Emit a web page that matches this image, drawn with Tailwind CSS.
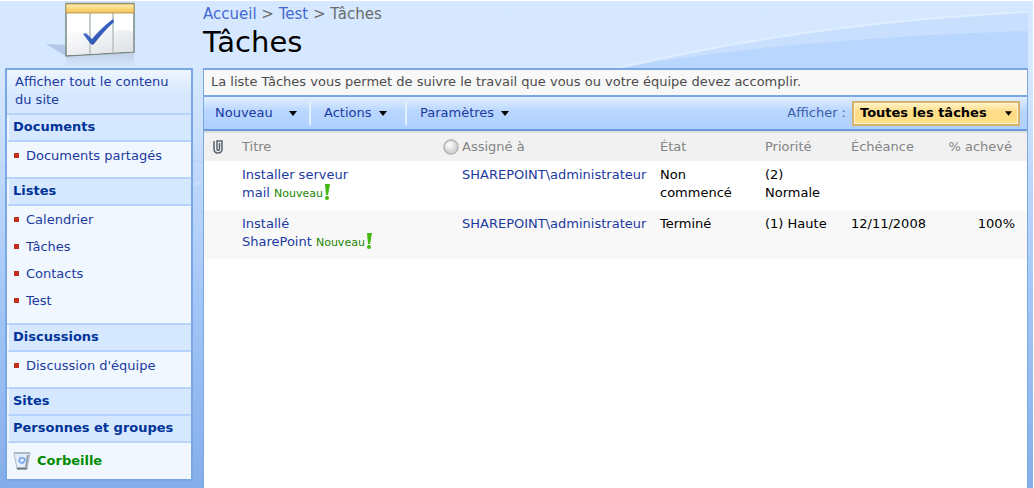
<!DOCTYPE html>
<html lang="fr">
<head>
<meta charset="utf-8">
<title>Tâches</title>
<script src="https://cdn.jsdelivr.net/npm/@tailwindcss/browser@4"></script>
</head>
<body class="bg-white pt-px pr-px font-['DejaVu_Sans',sans-serif] text-[13px] leading-[18px] text-[#1b3aa0]">
<div class="relative isolate flex min-h-[calc(100vh-1px)] bg-linear-to-b from-[#d6e8ff] from-15% via-[#a5c7f7] via-60% to-[#84aeea] pr-[5px]">
  <svg class="absolute top-0 right-[5px] -z-10 h-[67px] w-[410px]" viewBox="0 0 410 67" preserveAspectRatio="none" aria-hidden="true">
    <path d="M0 67Q190 22 410 11V67Z" fill="#c8dffe"/>
    <path d="M0 67Q100 50 200 42Q310 33 410 30V67Z" fill="#b9d6ff"/>
    <path d="M0 67Q190 22 410 11" fill="none" stroke="#e0eeff" stroke-width="2"/>
  </svg>
  <svg class="absolute top-[155px] left-0 -z-10 h-[40px] w-[203px]" viewBox="0 0 203 40" aria-hidden="true">
    <path d="M0 10Q120 -8 203 6" fill="none" stroke="#bad5fb" stroke-width="2"/>
    <path d="M160 34Q190 32 203 25" fill="none" stroke="#c9dffc" stroke-width="2"/>
  </svg>

  <aside class="w-[203px] shrink-0 pr-[10px] pl-[5px]">
    <div class="flex h-[67px] pl-[40px]">
      <svg class="h-[67px] w-[95px]" viewBox="45 1 95 67" role="img" aria-label="Liste de tâches">
        <defs>
          <linearGradient id="gold" x2="0" y2="1"><stop stop-color="#fff1bd"/><stop offset=".5" stop-color="#fbd67b"/><stop offset="1" stop-color="#f3c25f"/></linearGradient>
          <linearGradient id="cell" x2="1" y2="1"><stop stop-color="#fff"/><stop offset="1" stop-color="#dcdfe4"/></linearGradient>
          <linearGradient id="reflection" x2="0" y2="1"><stop stop-color="#b9c6d8"/><stop offset="1" stop-color="#d6e8ff"/></linearGradient>
          <linearGradient id="tick" x2="1" y2="1"><stop stop-color="#5c8ce6"/><stop offset="1" stop-color="#17379a"/></linearGradient>
        </defs>
        <path d="M46 44L66 45V56Z" fill="#b3c8e6"/>
        <path d="M66 57L134 53V67H66Z" fill="url(#reflection)" opacity=".7"/>
        <path d="M66 3.500H134V52L66 56Z" fill="#fff" stroke="#788780" stroke-width="1.500"/>
        <path d="M67 33Q78 29 89 33V54L67 55ZM91 33Q102 28 112 31V52.500L91 54ZM114 31Q124 28 133 32V51.500L114 52.500Z" fill="url(#cell)"/>
        <path d="M90 13V54M113 13V53" stroke="#c5cdca" stroke-width="2"/>
        <path d="M66 4H134V13H66Z" fill="url(#gold)" stroke="#b99a56" stroke-width="1"/>
        <path d="M83 34Q86 32 88 35L92 39Q101 28 113 19L114 22Q104 31 94 44Q92 46 90 43Z" fill="url(#tick)"/>
      </svg>
    </div>
    <nav class="border-2 border-[#7ba7e5] bg-[#f0f7ff]" aria-label="Lancement rapide">
      <a href="#" class="block border-b-2 border-[#b6d3fb] bg-linear-to-b from-[#edf5ff] to-[#d6e8ff] to-60% pt-[3px] pr-2 pb-[4px] pl-[8px]">Afficher tout le contenu du site</a>
      <h2 class="h-[27px] border-b-2 border-l-2 border-[#b6d3fb] border-l-[#f0f7ff] bg-[#d6e8ff] pl-[4px] text-[13px] leading-6 font-bold text-[#003399]"><a href="#">Documents</a></h2>
      <ul class="h-[37px] border-b-2 border-[#b6d3fb]">
        <li class="flex h-[27px] items-center gap-[7px] pl-[7px]"><span class="size-[5px] bg-[#c0301a]"></span><a href="#">Documents partagés</a></li>
      </ul>
      <h2 class="h-[27px] border-b-2 border-l-2 border-[#b6d3fb] border-l-[#f0f7ff] bg-[#d6e8ff] pl-[4px] text-[13px] leading-6 font-bold text-[#003399]"><a href="#">Listes</a></h2>
      <ul class="h-[119px] border-b-2 border-[#b6d3fb]">
        <li class="flex h-[27px] items-center gap-[7px] pl-[7px]"><span class="size-[5px] bg-[#c0301a]"></span><a href="#">Calendrier</a></li>
        <li class="flex h-[27px] items-center gap-[7px] pl-[7px]"><span class="size-[5px] bg-[#c0301a]"></span><a href="#">Tâches</a></li>
        <li class="flex h-[27px] items-center gap-[7px] pl-[7px]"><span class="size-[5px] bg-[#c0301a]"></span><a href="#">Contacts</a></li>
        <li class="flex h-[27px] items-center gap-[7px] pl-[7px]"><span class="size-[5px] bg-[#c0301a]"></span><a href="#">Test</a></li>
      </ul>
      <h2 class="h-[27px] border-b-2 border-l-2 border-[#b6d3fb] border-l-[#f0f7ff] bg-[#d6e8ff] pl-[4px] text-[13px] leading-6 font-bold text-[#003399]"><a href="#">Discussions</a></h2>
      <ul class="h-[37px] border-b-2 border-[#b6d3fb]">
        <li class="flex h-[27px] items-center gap-[7px] pl-[7px]"><span class="size-[5px] bg-[#c0301a]"></span><a href="#">Discussion d'équipe</a></li>
      </ul>
      <h2 class="h-[27px] border-b-2 border-l-2 border-[#b6d3fb] border-l-[#f0f7ff] bg-[#d6e8ff] pl-[4px] text-[13px] leading-6 font-bold text-[#003399]"><a href="#">Sites</a></h2>
      <h2 class="h-[27px] border-b-2 border-l-2 border-[#b6d3fb] border-l-[#f0f7ff] bg-[#d6e8ff] pl-[4px] text-[13px] leading-6 font-bold whitespace-nowrap text-[#003399]"><a href="#">Personnes et groupes</a></h2>
      <a href="#" class="flex h-[36px] items-center gap-[6px] pl-[6px] font-bold text-[#008c00]">
        <svg class="h-[18px] w-[18px]" viewBox="0 0 18 18" aria-hidden="true">
          <path d="M1 1H17L14 17H4Z" fill="#e3eefb" stroke="#b4bfca"/>
          <path d="M1 1H17" stroke="#8d9aa8"/>
          <path d="M15 3L13 15" stroke="#94a0ad" stroke-width="2"/>
          <path d="M4 16.500H14" stroke="#6d7780" stroke-width="2"/>
          <path d="M7 6H11L12 8L10 11H8L6 9Z" fill="none" stroke="#6fa0f3" stroke-width="1.500"/>
        </svg>Corbeille</a>
    </nav>
  </aside>

  <div class="flex min-w-0 grow flex-col">
    <header class="h-[67px]">
      <nav class="pt-[4px] text-[15px] text-[#6b6b6b]" aria-label="Fil d'Ariane"><a href="#" class="text-[#4668d2]">Accueil</a> &gt; <a href="#" class="text-[#4668d2]">Test</a> &gt; Tâches</nav>
      <h1 class="text-[29px] leading-[38px] text-black">Tâches</h1>
    </header>
    <main class="flex grow flex-col border-x border-t-2 border-[#7ba7e5] bg-white">
      <p class="h-[25px] bg-[#f8f8f8] pl-[7px] leading-6 text-[#4c4c4c]">La liste Tâches vous permet de suivre le travail que vous ou votre équipe devez accomplir.</p>
      <div class="flex h-[36px] items-center border-y-2 border-t-[#7ba7e5] border-b-[#6c98d8] bg-linear-to-b from-[#e2efff] from-0% via-[#b8d6ff] via-45% to-[#aed0ff]">
        <button type="button" class="flex h-6 w-[107px] items-center gap-[16px] border-r-2 border-[#e2efff] pl-[11px]">Nouveau<svg class="h-[5px] w-[8px]" viewBox="0 0 8 5" aria-hidden="true"><path d="M0 0H8L4 5Z"/></svg></button>
        <button type="button" class="flex h-6 w-[96px] items-center gap-[7px] border-r-2 border-[#e2efff] pl-[13px]">Actions<svg class="h-[5px] w-[8px]" viewBox="0 0 8 5" aria-hidden="true"><path d="M0 0H8L4 5Z"/></svg></button>
        <button type="button" class="flex h-6 items-center gap-[7px] pl-[13px]">Paramètres<svg class="h-[5px] w-[8px]" viewBox="0 0 8 5" aria-hidden="true"><path d="M0 0H8L4 5Z"/></svg></button>
        <label for="view" class="mr-[6px] ml-auto text-[#3d5fa8]">Afficher :</label>
        <div class="relative mr-[7px] flex h-[25px] w-[168px] items-center border-2 border-[#d6b26c] bg-[#ffdf8c]">
          <select id="view" class="h-full w-full appearance-none border border-[#fff6d8] bg-linear-to-b from-[#fff0c0] to-[#ffdd87] to-40% pl-[5px] font-bold text-black"><option>Toutes les tâches</option></select>
          <svg class="pointer-events-none absolute right-[6px] h-[5px] w-[7px]" viewBox="0 0 8 5" aria-hidden="true"><path d="M0 0H8L4 5Z"/></svg>
        </div>
      </div>
      <table class="w-full table-fixed border-collapse text-left text-black">
        <colgroup><col class="w-[34px]"><col><col class="w-[19px]"><col class="w-[198px]"><col class="w-[105px]"><col class="w-[86px]"><col class="w-[90px]"><col class="w-[90px]"></colgroup>
        <thead class="bg-[#f1f1f1] text-[#848484]">
          <tr class="h-[29px] border-t-2 border-[#dedede]">
            <th class="pl-[8px]"><svg class="h-[14px] w-[12px]" viewBox="0 0 12 14" fill="none" stroke="#59636f" stroke-width="1.500" role="img" aria-label="Pièces jointes"><path d="M2 1V9Q2 13 6 13Q10 13 10 9V1H5V9Q5 10.500 6 10.500Q7.500 10.500 7.500 9V3"/></svg></th>
            <th class="pl-[4px] font-normal">Titre</th>
            <th class="pl-[4px]"><svg class="size-[16px] max-w-none" viewBox="0 0 16 16" aria-hidden="true"><defs><radialGradient id="presence" cx=".4" cy=".35"><stop stop-color="#fff"/><stop offset="1" stop-color="#d4d4d4"/></radialGradient></defs><circle cx="8" cy="8" r="7" fill="url(#presence)" stroke="#b4b4b4" stroke-width="1.500"/></svg></th>
            <th class="pl-[4px] font-normal">Assigné à</th>
            <th class="pl-[4px] font-normal">État</th>
            <th class="pl-[4px] font-normal">Priorité</th>
            <th class="pl-[4px] font-normal">Échéance</th>
            <th class="pr-[15px] text-right font-normal">% achevé</th>
          </tr>
        </thead>
        <tbody class="align-top">
          <tr class="h-[49px]">
            <td></td>
            <td class="pt-[5px] pl-[4px]"><a href="#" class="text-[#1b3aa0]">Installer serveur<br>mail</a> <span class="text-[11px] text-[#1b8500]">Nouveau<svg class="ml-px inline h-[16px] w-[6px] align-text-bottom" viewBox="0 0 6 16" fill="#44b80c" aria-hidden="true"><path d="M1 0H6L4 11H2Z"/><circle cx="3" cy="14" r="2"/></svg></span></td>
            <td></td>
            <td class="pt-[5px] pl-[4px]"><a href="#" class="text-[#1b3aa0]">SHAREPOINT\administrateur</a></td>
            <td class="pt-[5px] pl-[4px]">Non<br>commencé</td>
            <td class="pt-[5px] pl-[4px]">(2)<br>Normale</td>
            <td></td>
            <td></td>
          </tr>
          <tr class="h-[49px] bg-[#f8f8f8]">
            <td></td>
            <td class="pt-[5px] pl-[4px]"><a href="#" class="text-[#1b3aa0]">Installé<br>SharePoint</a> <span class="text-[11px] text-[#1b8500]">Nouveau<svg class="ml-px inline h-[16px] w-[6px] align-text-bottom" viewBox="0 0 6 16" fill="#44b80c" aria-hidden="true"><path d="M1 0H6L4 11H2Z"/><circle cx="3" cy="14" r="2"/></svg></span></td>
            <td></td>
            <td class="pt-[5px] pl-[4px]"><a href="#" class="text-[#1b3aa0]">SHAREPOINT\administrateur</a></td>
            <td class="pt-[5px] pl-[4px]">Terminé</td>
            <td class="pt-[5px] pl-[4px]">(1) Haute</td>
            <td class="pt-[5px] pl-[4px]">12/11/2008</td>
            <td class="pt-[5px] pr-[12px] text-right">100%</td>
          </tr>
        </tbody>
      </table>
    </main>
  </div>
</div>
</body>
</html>
